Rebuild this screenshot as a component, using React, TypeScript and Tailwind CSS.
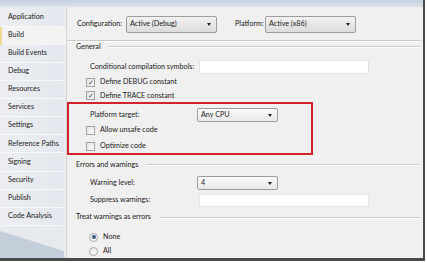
import React from "react";

const tabs = [
  "Application",
  "Build",
  "Build Events",
  "Debug",
  "Resources",
  "Services",
  "Settings",
  "Reference Paths",
  "Signing",
  "Security",
  "Publish",
  "Code Analysis",
];

function Select({ value, width, light }: { value: string; width: string; light?: boolean }) {
  return (
    <div
      className={`${width} shrink-0 h-full flex items-center justify-between pl-[3px] pr-[5px] rounded-[2px] border border-[#9d9d9d] ${
        light ? "bg-gradient-to-b from-[#fbfbfb] to-[#e9e9e9]" : "bg-gradient-to-b from-[#f2f2f2] to-[#dcdcdc]"
      }`}
    >
      <span className="whitespace-nowrap">{value}</span>
      <span className="w-0 h-0 border-l-[2.5px] border-r-[2.5px] border-t-[3px] border-l-transparent border-r-transparent border-t-[#222]" />
    </div>
  );
}

function Check({ checked }: { checked?: boolean }) {
  return (
    <div className="w-[9px] h-[9px] shrink-0 border border-[#a2a2a2] bg-gradient-to-br from-[#e4e4e4] to-[#fafafa] flex items-center justify-center text-[7px] leading-none text-[#3a4a66]">
      {checked ? "✓" : ""}
    </div>
  );
}

function Radio({ checked }: { checked?: boolean }) {
  return (
    <div className="w-[9px] h-[9px] shrink-0 rounded-full border border-[#a8a8a8] bg-gradient-to-br from-[#e6e6e6] to-[#fbfbfb] flex items-center justify-center">
      {checked && <div className="w-[4px] h-[4px] rounded-full bg-[#3d5f86]" />}
    </div>
  );
}

function Header({ label }: { label: string }) {
  return (
    <div className="h-[12px] flex items-center pl-[9px] pr-[3px] gap-[8px]">
      <span className="whitespace-nowrap">{label}</span>
      <div className="flex-1 flex flex-col">
        <div className="h-px bg-[#cdcdcd]" />
        <div className="h-px bg-white" />
      </div>
    </div>
  );
}

export default function App() {
  return (
    <div className="w-[427px] h-[263px] bg-white overflow-hidden font-['Lato',sans-serif] text-[7.2px] text-[#1a1a1a]">
      <div className="w-[425px] h-[261px] border-r-[2px] border-b-[3px] border-[#4a4a4a] flex flex-col">
        <div className="h-[7px] shrink-0 bg-gradient-to-b from-[#c6d1de] to-[#dbe2ea]" />
        <div className="flex-1 flex min-h-0">
          {/* sidebar */}
          <div className="w-[66px] shrink-0 flex flex-col bg-[#e9ecf0]">
            <div className="h-[1.5px]" />
            {tabs.map((t) =>
              t === "Build" ? (
                <div
                  key={t}
                  className="h-[18.27px] flex items-center pl-[6px] bg-[#f3f3f3] border-l-[2px] border-[#f0d88e] w-[66px] whitespace-nowrap"
                >
                  {t}
                </div>
              ) : (
                <div
                  key={t}
                  className="h-[18.27px] flex items-center pl-[8px] w-[64px] whitespace-nowrap bg-gradient-to-r from-[#eceef2] to-[#e3e7ed] border-b border-[#f7f8fa]"
                >
                  {t}
                </div>
              )
            )}
            <div className="flex-1 w-[64px]">
              <svg width="64" height="32" viewBox="0 0 64 32" preserveAspectRatio="none" className="w-full h-full">
                <polygon points="0,0 64,0 64,25 0,5" fill="#e6e9ee" />
                <polygon points="0,5 64,25 64,32 0,32" fill="#c4cedb" />
              </svg>
            </div>
          </div>

          {/* content */}
          <div className="flex-1 bg-[#f0f0f0] border-l border-[#d6d6d6] flex flex-col">
            <div className="h-[17px] mt-[9px] flex items-center pl-[10px] whitespace-nowrap">
              <span className="w-[49px] shrink-0">Configuration:</span>
              <Select value="Active (Debug)" width="w-[91px]" />
              <span className="ml-[18px] w-[30px] shrink-0">Platform:</span>
              <Select value="Active (x86)" width="w-[91px]" />
            </div>
            <div className="mt-[7px] mr-[2px] flex flex-col">
              <div className="h-px bg-[#c9c9c9]" />
              <div className="h-px bg-white" />
            </div>

            <Header label="General" />

            <div className="h-[14px] mt-[7px] flex items-center pl-[23px] whitespace-nowrap">
              <span className="w-[109px] shrink-0">Conditional compilation symbols:</span>
              <div className="w-[170px] h-full bg-white border border-[#e2e2e2]" />
            </div>
            <div className="h-[14px] mt-[2px] flex items-center pl-[19px] gap-[5px] whitespace-nowrap">
              <Check checked />
              <span>Define DEBUG constant</span>
            </div>
            <div className="h-[13px] flex items-center pl-[19px] gap-[5px] whitespace-nowrap">
              <Check checked />
              <span>Define TRACE constant</span>
            </div>

            <div className="w-[246px] h-[53px] border-[2.5px] border-[#d4222c] flex flex-col whitespace-nowrap">
              <div className="h-[14px] mt-[4px] flex items-center pl-[21px]">
                <span className="w-[107px] shrink-0">Platform target:</span>
                <Select value="Any CPU" width="w-[81px]" light />
              </div>
              <div className="h-[17px] flex items-center pl-[17px] gap-[5px]">
                <Check />
                <span>Allow unsafe code</span>
              </div>
              <div className="h-[14px] flex items-center pl-[17px] gap-[5px]">
                <Check />
                <span>Optimize code</span>
              </div>
            </div>

            <div className="mt-[4px]">
              <Header label="Errors and warnings" />
            </div>
            <div className="h-[14px] mt-[5px] flex items-center pl-[23px] whitespace-nowrap">
              <span className="w-[107px] shrink-0">Warning level:</span>
              <Select value="4" width="w-[81px]" light />
            </div>
            <div className="h-[13px] mt-[4px] flex items-center pl-[23px] whitespace-nowrap">
              <span className="w-[109px] shrink-0">Suppress warnings:</span>
              <div className="w-[170px] h-full bg-white border border-[#e6e6e6]" />
            </div>

            <div className="mt-[5px]">
              <Header label="Treat warnings as errors" />
            </div>
            <div className="h-[14px] mt-[7px] flex items-center pl-[22px] gap-[5px]">
              <Radio checked />
              <span>None</span>
            </div>
            <div className="h-[14px] flex items-center pl-[22px] gap-[5px]">
              <Radio />
              <span>All</span>
            </div>
          </div>
        </div>
      </div>
    </div>
  );
}
